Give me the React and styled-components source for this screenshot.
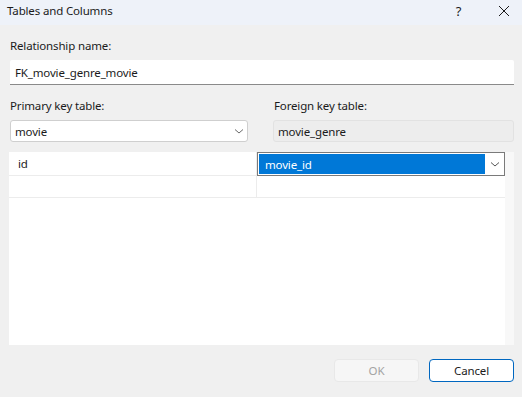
import React from 'react';
import styled, { createGlobalStyle } from 'styled-components';

const GlobalStyle = createGlobalStyle`
  html, body {
    margin: 0;
    padding: 0;
    background: #f0f0f0;
  }
  body {
    font-family: "Segoe UI", "Noto Sans", "Liberation Sans", sans-serif;
    font-size: 11.5px;
    letter-spacing: -0.15px;
    color: #1b1b1b;
  }
`;

const Window = styled.div`
  width: 522px;
  height: 397px;
  display: flex;
  flex-direction: column;
  background: #f0f0f0;
  overflow: hidden;
`;

const TitleBar = styled.div`
  height: 25px;
  flex: none;
  display: flex;
  align-items: center;
  padding-left: 7px;
  background: #eef2f9;
`;

const Title = styled.div`
  flex: 1;
  line-height: 16px;
  margin-top: -3px;
`;

const TitleButton = styled.div`
  width: ${(p) => p.$w}px;
  height: 25px;
  display: flex;
  align-items: center;
  justify-content: center;
  margin-top: -3px;
  font-size: 13px;
`;

const Body = styled.div`
  flex: 1;
  display: flex;
  flex-direction: column;
  padding: 13px 8px 0 10px;
`;

const Label = styled.div`
  line-height: 16px;
  height: 16px;
  padding-left: ${(p) => p.$indent || 0}px;
`;

const TextInput = styled.div`
  height: 24px;
  margin-top: 6px;
  background: #fff;
  border-bottom: 1px solid #8a8a8a;
  display: flex;
  align-items: center;
  padding-left: 5px;
  border-radius: 2px 2px 0 0;
`;

const Columns = styled.div`
  display: grid;
  grid-template-columns: 238px 1fr;
  column-gap: 25px;
  margin-top: 13px;
`;

const Field = styled.div`
  display: flex;
  flex-direction: column;
`;

const Combo = styled.div`
  height: 20px;
  margin-top: 6px;
  border: 1px solid ${(p) => (p.$readOnly ? '#e2e2e2' : '#cfcfcf')};
  border-radius: 3px;
  background: ${(p) => (p.$readOnly ? '#ededed' : '#fff')};
  display: flex;
  align-items: center;
  padding-left: 4px;
`;

const ComboText = styled.div`
  flex: 1;
`;

const Chevron = ({ color = '#6a6a6a' }) => (
  <svg width="16" height="10" viewBox="0 0 16 10">
    <path d="M4 3.5 L8 7 L12 3.5" fill="none" stroke={color} strokeWidth="1" />
  </svg>
);

const Grid = styled.div`
  height: 193px;
  margin: 10px 0 0 -1px;
  background: #f8f8f8;
`;

const GridInner = styled.div`
  width: 496px;
  height: 100%;
  background: #fff;
`;

const Row = styled.div`
  display: grid;
  grid-template-columns: 248px 1fr;
  height: ${(p) => p.$h}px;
  border-bottom: 1px solid #ececec;
`;

const Cell = styled.div`
  display: flex;
  align-items: center;
  padding-left: 9px;
  border-right: ${(p) => (p.$last ? 'none' : '1px solid #ececec')};
`;

const EditCell = styled.div`
  display: flex;
  align-items: stretch;
  border: 1px solid #7a7a7a;
  margin-bottom: -1px;
  padding: 1px 0 1px 1px;
`;

const Selected = styled.div`
  width: 226px;
  background: #0078d7;
  color: #fff;
  display: flex;
  align-items: center;
  padding-left: 6px;
  box-sizing: border-box;
`;

const EditChevron = styled.div`
  flex: 1;
  display: flex;
  align-items: center;
  justify-content: center;
`;

const Footer = styled.div`
  display: flex;
  justify-content: flex-end;
  gap: 10px;
  margin-top: 14px;
`;

const Button = styled.button`
  width: 85px;
  height: 23px;
  box-sizing: border-box;
  font: inherit;
  letter-spacing: inherit;
  border-radius: 4px;
  border: 1px solid ${(p) => (p.$primary ? '#0067c0' : '#e8e8e8')};
  background: ${(p) => (p.$primary ? '#fff' : '#f6f6f6')};
  color: ${(p) => (p.$disabled ? '#a3a3a3' : '#1b1b1b')};
  padding: 0 0 1px;
`;

const CloseIcon = () => (
  <svg width="12" height="12" viewBox="0 0 12 12">
    <path d="M1 1 L11 11 M11 1 L1 11" stroke="#1b1b1b" strokeWidth="1" />
  </svg>
);

export default function App() {
  return (
    <>
      <GlobalStyle />
      <Window>
        <TitleBar>
          <Title>Tables and Columns</Title>
          <TitleButton $w={55}>?</TitleButton>
          <TitleButton $w={36}>
            <CloseIcon />
          </TitleButton>
        </TitleBar>
        <Body>
          <Label>Relationship name:</Label>
          <TextInput>FK_movie_genre_movie</TextInput>
          <Columns>
            <Field>
              <Label>Primary key table:</Label>
              <Combo>
                <ComboText>movie</ComboText>
                <Chevron />
              </Combo>
            </Field>
            <Field>
              <Label $indent={1}>Foreign key table:</Label>
              <Combo $readOnly>
                <ComboText>movie_genre</ComboText>
              </Combo>
            </Field>
          </Columns>
          <Grid>
            <GridInner>
              <Row $h={23}>
                <Cell>id</Cell>
                <EditCell>
                  <Selected>movie_id</Selected>
                  <EditChevron>
                    <Chevron color="#555" />
                  </EditChevron>
                </EditCell>
              </Row>
              <Row $h={21}>
                <Cell />
                <Cell $last />
              </Row>
            </GridInner>
          </Grid>
          <Footer>
            <Button $disabled>OK</Button>
            <Button $primary>Cancel</Button>
          </Footer>
        </Body>
      </Window>
    </>
  );
}
